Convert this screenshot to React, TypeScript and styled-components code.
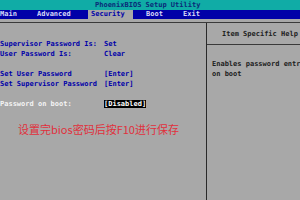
import React from "react";
import styled, { createGlobalStyle } from "styled-components";

const Global = createGlobalStyle`
  html, body { margin: 0; padding: 0; background: #a8a8a8; }
  #root { width: 300px; height: 200px; overflow: hidden; }
`;

const mono = `"DejaVu Sans Mono", "Liberation Mono", monospace`;

const Screen = styled.div`
  width: 300px;
  height: 200px;
  background: #a8a8a8;
  display: flex;
  flex-direction: column;
  font-family: ${mono};
  font-size: 7px;
  font-weight: bold;
  overflow: hidden;
`;

const TitleBar = styled.div`
  height: 10px;
  background: #10aca6;
  color: #0a2a78;
  line-height: 10px;
  padding-left: 95px;
  white-space: nowrap;
`;

const MenuBar = styled.div`
  height: 9px;
  background: #0000a8;
  display: flex;
  white-space: nowrap;
`;

const MenuItem = styled.div<{ $x: number; $active?: boolean }>`
  position: relative;
  flex: none;
  width: ${(p) => p.$x}px;
  line-height: 9px;
  color: ${(p) => (p.$active ? "#0000a8" : "#d8d8f8")};
  background: ${(p) => (p.$active ? "#a8a8a8" : "transparent")};
  padding-left: ${(p) => (p.$active ? 3 : 0)}px;
  box-sizing: border-box;
`;

const Gap = styled.div`
  height: 3px;
  border-bottom: 1px solid #3a3a3a;
`;

const Body = styled.div`
  flex: 1;
  display: grid;
  grid-template-columns: 206px 1px 1fr;
`;

const Left = styled.div`
  padding-top: 16px;
  display: flex;
  flex-direction: column;
`;

const Divider = styled.div`
  background: #2a2a2a;
`;

const Row = styled.div`
  height: 10px;
  line-height: 10px;
  display: grid;
  grid-template-columns: 104px 1fr;
  white-space: nowrap;
`;

const Label = styled.span<{ $white?: boolean }>`
  color: ${(p) => (p.$white ? "#f4f4f4" : "#0000a8")};
`;

const Value = styled.span<{ $selected?: boolean }>`
  color: ${(p) => (p.$selected ? "#ffffff" : "#0000a8")};
  background: ${(p) => (p.$selected ? "#000000" : "transparent")};
  justify-self: start;
  line-height: 8px;
  align-self: center;
`;

const Notice = styled.div`
  margin-top: 13px;
  padding-left: 18px;
  font-family: "Microsoft YaHei", "Noto Sans CJK SC", sans-serif;
  font-weight: normal;
  font-size: 11px;
  line-height: 14px;
  color: #e0303c;
  white-space: nowrap;
`;

const Right = styled.div`
  display: flex;
  flex-direction: column;
  min-width: 0;
`;

const HelpHeader = styled.div`
  height: 21px;
  line-height: 22px;
  border-bottom: 1px solid #3a3a3a;
  color: #202020;
  padding-left: 15px;
  white-space: nowrap;
`;

const HelpText = styled.div`
  padding-top: 14px;
  padding-left: 5px;
  line-height: 10px;
  color: #202020;
  white-space: nowrap;
`;

export default function App() {
  return (
    <>
      <Global />
      <Screen>
        <TitleBar>PhoenixBIOS Setup Utility</TitleBar>
        <MenuBar>
          <MenuItem $x={37}>Main</MenuItem>
          <MenuItem $x={51}>Advanced</MenuItem>
          <MenuItem $x={45} $active>Security</MenuItem>
          <MenuItem $x={13}> </MenuItem>
          <MenuItem $x={37}>Boot</MenuItem>
          <MenuItem $x={40}>Exit</MenuItem>
        </MenuBar>
        <Gap />
        <Body>
          <Left>
            <Row>
              <Label>Supervisor Password Is:</Label>
              <Value>Set</Value>
            </Row>
            <Row>
              <Label>User Password Is:</Label>
              <Value>Clear</Value>
            </Row>
            <Row />
            <Row>
              <Label>Set User Password</Label>
              <Value>[Enter]</Value>
            </Row>
            <Row>
              <Label>Set Supervisor Password</Label>
              <Value>[Enter]</Value>
            </Row>
            <Row />
            <Row>
              <Label $white>Password on boot:</Label>
              <Value $selected>[Disabled]</Value>
            </Row>
            <Notice>设置完bios密码后按F10进行保存</Notice>
          </Left>
          <Divider />
          <Right>
            <HelpHeader>Item Specific Help</HelpHeader>
            <HelpText>
              Enables password entry
              <br />
              on boot
            </HelpText>
          </Right>
        </Body>
      </Screen>
    </>
  );
}
